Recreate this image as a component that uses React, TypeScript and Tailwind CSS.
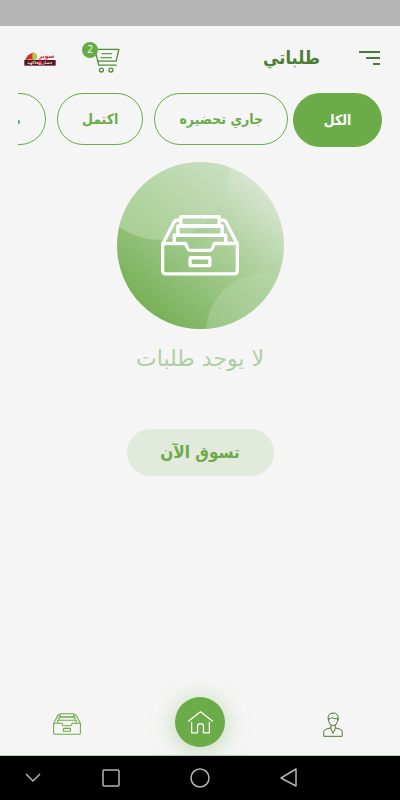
import React from 'react';
import clsx from 'clsx';

const tabs = [
  { label: 'الكل', active: true },
  { label: 'جاري تحضيره', active: false },
  { label: 'اكتمل', active: false },
  { label: 'ملغي', active: false },
];

function DrawerIcon({ className, strokeWidth }: { className: string; strokeWidth: number }) {
  return (
    <svg
      viewBox="0 0 236 184"
      className={className}
      fill="none"
      stroke="currentColor"
      strokeWidth={strokeWidth}
      strokeLinejoin="round"
      aria-hidden="true"
    >
      <path d="M60 5h116v28H60z" />
      <path d="M51 33h134v28H51zM40 84V61h156v23" />
      <path d="M60 15H49q-7 0-10 7L6 86M176 15h11q7 0 10 7l33 64" />
      <path d="M5 86h69l8 17q2 4 7 4h58q5 0 7-4l8-17h69v82q0 10-10 10H15q-10 0-10-10z" />
      <rect x="88" y="129" width="60" height="24" rx="3" />
    </svg>
  );
}

function CartIcon() {
  return (
    <svg viewBox="0 0 78 76" className="h-[25px] w-[26px]" fill="none" stroke="#528c38" strokeWidth="4" aria-hidden="true">
      <path d="M0 4h75l-8 36H11L2 4M11 40l3 12h53" strokeLinejoin="round" strokeLinecap="round" />
      <path d="M22 17h32M19 29h35" stroke="#62a144" />
      <circle cx="22" cy="67" r="6" />
      <circle cx="51" cy="67" r="6" />
    </svg>
  );
}

function StoreLogo() {
  return (
    <svg viewBox="0 0 96 45" className="h-[15px] w-8" role="img" aria-label="سوبر خضار وفاكهة">
      <path d="M3 27Q10 9 27 5q5 12-2 20z" fill="#d92f2c" />
      <path d="M5 27q12 3 22-4V5q12 2 12 13 0 10-12 11H6z" fill="#74a83b" />
      <path d="M27 3q13 4 13 15t-11 10q-7-9-2-25z" fill="#b3c947" />
      <rect x="1" y="27" width="94" height="17" fill="#4f182f" />
      <circle cx="49" cy="36" r="7" fill="#d92949" />
      <text x="68" y="20" textAnchor="middle" fontSize="20" fontWeight="bold" fill="#df2947" fontFamily="DejaVu Sans Condensed, sans-serif">
        سوبر
      </text>
      <text x="48" y="39" textAnchor="middle" fontSize="13" fontWeight="bold" fill="#f1d7b5" fontFamily="DejaVu Sans Condensed, sans-serif">
        خضار وفاكهة
      </text>
    </svg>
  );
}

function EmptyIllustration() {
  return (
    <div className="grid size-[167px] place-items-center text-white">
      <svg viewBox="0 0 500 500" className="col-start-1 row-start-1 size-full" aria-hidden="true">
        <defs>
          <linearGradient id="disc" x1="0.2" y1="0.9" x2="0.85" y2="0.15">
            <stop offset="0" stopColor="#78b158" />
            <stop offset="0.5" stopColor="#a3ca8f" />
            <stop offset="1" stopColor="#d6e5cf" />
          </linearGradient>
          <linearGradient id="shine" x1="0" y1="0.7" x2="1" y2="0.3">
            <stop offset="0" stopColor="#c3e0b6" stopOpacity="0.5" />
            <stop offset="1" stopColor="#bfdab2" stopOpacity="0.5" />
          </linearGradient>
          <clipPath id="round">
            <circle cx="250" cy="250" r="250" />
          </clipPath>
        </defs>
        <g clipPath="url(#round)">
          <path d="M0 0h500v500H0z" fill="url(#disc)" />
          <circle cx="128" cy="26" r="207" fill="url(#shine)" />
          <circle cx="441" cy="508" r="174" fill="#bcd9ae" fillOpacity="0.4" />
        </g>
      </svg>
      <DrawerIcon className="z-10 col-start-1 row-start-1 h-[61px] w-[78px]" strokeWidth={10} />
    </div>
  );
}

function UserIcon() {
  return (
    <svg viewBox="0 0 60 76" className="h-[25px] w-5" fill="none" stroke="#4b7a32" strokeWidth="3" strokeLinejoin="round" aria-hidden="true">
      <path d="M16 25q-5-21 14-22 18-1 16 22" />
      <path d="M17 20q6 1 9-3 8 5 18 3v9q-3 12-14 13-10-1-13-13z" />
      <path d="M24 40v8L9 52q-7 2-7 9v13h56V61q0-7-7-9l-14-4v-8" />
      <path d="M23 48l7 17 8-17" />
    </svg>
  );
}

function HomeIcon() {
  return (
    <svg viewBox="0 0 76 72" className="h-6 w-[25px]" fill="none" stroke="white" strokeWidth="4" strokeLinecap="round" strokeLinejoin="round" aria-hidden="true">
      <path d="M2 33L38 5l36 28" />
      <path d="M11 37v32h18V49q0-8 9-8t9 8v20h18V37" />
    </svg>
  );
}

export default function App() {
  return (
    <div
      dir="rtl"
      className="flex min-h-screen flex-col bg-[#f5f5f5] font-['DejaVu_Sans_Condensed','DejaVu_Sans',sans-serif] text-[#6bab48]"
    >
      <div className="h-[26px] bg-[#b5b5b5]" />

      {/* Header */}
      <header className="flex h-16 items-center pr-5 pl-6">
        <button type="button" aria-label="القائمة">
          <svg viewBox="0 0 21 14" className="h-[14px] w-[21px]" stroke="#4b7a32" strokeWidth="2" aria-hidden="true">
            <path d="M0 1h21M7 7h14M14 13h7" />
          </svg>
        </button>
        <h1 className="mr-[39px] text-lg font-bold text-[#4b7d33]">طلباتي</h1>
        <div className="mr-auto flex items-center gap-[26px]">
          <button type="button" aria-label="السلة" className="relative mt-1">
            <span className="block w-[38px]">
              <CartIcon />
            </span>
            <span className="absolute -top-[6px] left-0 grid size-4 place-items-center rounded-full bg-[#65ac46] font-['Open_Sans',sans-serif] text-[10px] text-white">
              2
            </span>
          </button>
          <StoreLogo />
        </div>
      </header>

      {/* Order filters */}
      <nav className="mx-[18px] flex items-start gap-[11px] overflow-hidden pt-[3px]">
        {tabs.map((tab) => (
          <button
            key={tab.label}
            type="button"
            className={clsx(
              'shrink-0 rounded-full text-sm font-bold whitespace-nowrap',
              tab.active
                ? '-ml-[6px] h-[54px] w-[89px] bg-[#6bab48] text-white'
                : 'h-[52px] border border-[#6bab48] px-6',
            )}
          >
            {tab.label}
          </button>
        ))}
      </nav>

      {/* Empty state */}
      <main className="flex grow flex-col items-center pt-[15px]">
        <EmptyIllustration />
        <p className="mt-3 font-['DejaVu_Sans',sans-serif] text-[22px] leading-9 text-[#b1cda4]">لا يوجد طلبات</p>
        <a
          href="#shop"
          className="mt-[52px] grid h-[47px] w-[147px] place-items-center rounded-full bg-[#e1eadd] text-[17px] font-bold"
        >
          تسوق الآن
        </a>
      </main>

      {/* Bottom navigation */}
      <footer>
        <nav className="grid grid-cols-3 items-center overflow-hidden border-b border-[#b9cbb0] pt-8 pb-2">
          <a href="#profile" aria-label="حسابي" className="mt-1 justify-self-center">
            <UserIcon />
          </a>
          <a
            href="#home"
            aria-label="الرئيسية"
            className="grid size-[50px] place-items-center justify-self-center rounded-full bg-[#6bab48] shadow-[0_3px_24px_rgba(107,171,72,0.4)]"
          >
            <HomeIcon />
          </a>
          <a href="#orders" aria-label="طلباتي" className="mt-1 justify-self-center">
            <DrawerIcon className="h-[22px] w-7" strokeWidth={9} />
          </a>
        </nav>

        <div
          dir="ltr"
          className="grid h-11 grid-cols-[66fr_89fr_89fr_89fr_67fr] items-center justify-items-center bg-black text-[#b5b5b5]"
        >
          <button type="button" aria-label="إخفاء">
            <svg viewBox="0 0 16 10" className="h-[10px] w-4" fill="none" stroke="currentColor" strokeWidth="1.5" aria-hidden="true">
              <path d="M1 1l7 7 7-7" />
            </svg>
          </button>
          <button type="button" aria-label="التطبيقات">
            <svg viewBox="0 0 18 18" className="size-[18px]" fill="none" stroke="currentColor" strokeWidth="1.5" aria-hidden="true">
              <rect x="1" y="1" width="16" height="16" rx="1" />
            </svg>
          </button>
          <button type="button" aria-label="الشاشة الرئيسية">
            <svg viewBox="0 0 20 20" className="size-5" fill="none" stroke="currentColor" strokeWidth="1.5" aria-hidden="true">
              <circle cx="10" cy="10" r="9" />
            </svg>
          </button>
          <button type="button" aria-label="رجوع">
            <svg viewBox="0 0 18 20" className="h-5 w-[18px]" fill="none" stroke="currentColor" strokeWidth="1.5" strokeLinejoin="round" aria-hidden="true">
              <path d="M16 1v17L1 10z" />
            </svg>
          </button>
        </div>
      </footer>
    </div>
  );
}
